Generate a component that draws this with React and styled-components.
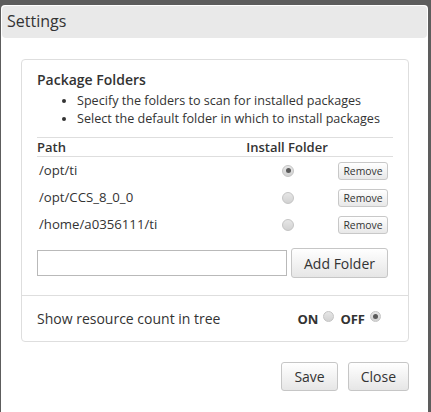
import React from 'react';
import styled, { createGlobalStyle } from 'styled-components';

const GlobalStyle = createGlobalStyle`
  body {
    margin: 0;
    background-color: #5d5d5d;
    font-family: "Open Sans", "Noto Sans", sans-serif;
    color: #333;
    overflow: hidden;
  }
`;

const folders = [
  { path: '/opt/ti', selected: true },
  { path: '/opt/CCS_8_0_0', selected: false },
  { path: '/home/a0356111/ti', selected: false },
];

const App = () => {
  return (
    <React.Fragment>
      <GlobalStyle />
      <Dialog>
        <TitleBar>Settings</TitleBar>
        <Content>
          <Panel>
            <FolderSection>
              <PanelTitle>Package Folders</PanelTitle>
              <HelpList>
                <li>Specify the folders to scan for installed packages</li>
                <li>Select the default folder in which to install packages</li>
              </HelpList>
              <FolderTable>
                <HeadCell>Path</HeadCell>
                <HeadCell className='center'>Install Folder</HeadCell>
                <HeadCell />
                {folders.map(folder => (
                  <React.Fragment key={folder.path}>
                    <PathCell>{folder.path}</PathCell>
                    <RadioCell>
                      <Radio checked={folder.selected} />
                    </RadioCell>
                    <ButtonCell>
                      <SmallButton>Remove</SmallButton>
                    </ButtonCell>
                  </React.Fragment>
                ))}
              </FolderTable>
              <AddRow>
                <FolderInput type='text' />
                <Button className='tall'>Add Folder</Button>
              </AddRow>
            </FolderSection>
            <OptionRow>
              <span>Show resource count in tree</span>
              <Toggle>
                <ToggleLabel>ON</ToggleLabel>
                <Radio small />
                <ToggleLabel>OFF</ToggleLabel>
                <Radio small checked />
              </Toggle>
            </OptionRow>
          </Panel>
          <Footer>
            <Button>Save</Button>
            <Button>Close</Button>
          </Footer>
        </Content>
      </Dialog>
    </React.Fragment>
  );
};

const Dialog = styled.div`
  margin: 5px 0 0 1px;
  width: 427px;
  height: 420px;
  background-color: #fff;
  border-radius: 4px 4px 0 0;
  padding-top: 1px;
  box-sizing: border-box;
`;

const TitleBar = styled.div`
  margin: 0 0 0 1px;
  width: 425px;
  height: 32px;
  line-height: 31px;
  padding-left: 5px;
  box-sizing: border-box;
  background-color: #e9e9e9;
  border-radius: 4px;
  font-size: 16px;
  color: #333;
`;

const Content = styled.div`
  padding: 21px 19px 0 20px;
`;

const Panel = styled.div`
  border: 1px solid #dedede;
  border-radius: 4px;
`;

const FolderSection = styled.div`
  padding: 10px 15px 17px 15px;
  border-bottom: 1px solid #dedede;
`;

const PanelTitle = styled.div`
  font-size: 14px;
  font-weight: 600;
  line-height: 19px;
`;

const HelpList = styled.ul`
  margin: 3px 0 0 0;
  padding: 0 0 0 40px;
  font-size: 12.6px;
  line-height: 17.5px;
  li::marker {
    font-size: 11px;
  }
`;

const FolderTable = styled.div`
  display: grid;
  grid-template-columns: 200px 100px 56px;
  margin-top: 10px;
  border-top: 1px solid #dedede;
`;

const HeadCell = styled.div`
  font-size: 13px;
  font-weight: 600;
  line-height: 18px;
  border-bottom: 1px solid #dedede;
  &.center {
    text-align: center;
  }
`;

const PathCell = styled.div`
  font-size: 13.2px;
  line-height: 27px;
  padding-left: 2px;
`;

const RadioCell = styled.div`
  display: flex;
  align-items: center;
  justify-content: center;
  padding-left: 2px;
`;

const ButtonCell = styled.div`
  display: flex;
  align-items: center;
  padding-left: 1px;
`;

const Radio = styled.span`
  position: relative;
  display: inline-block;
  width: ${props => (props.small ? '11px' : '12px')};
  height: ${props => (props.small ? '11px' : '12px')};
  border-radius: 50%;
  box-sizing: border-box;
  border: 1px solid #c4c4c4;
  background: linear-gradient(#e6e6e6, #d2d2d2);
  &::after {
    content: '';
    display: ${props => (props.checked ? 'block' : 'none')};
    position: absolute;
    left: 50%;
    top: 50%;
    width: 5px;
    height: 5px;
    margin: -2.5px 0 0 -2.5px;
    border-radius: 50%;
    background-color: #5a5a5a;
  }
`;

const SmallButton = styled.button`
  width: 50px;
  height: 18px;
  padding: 0;
  font-family: "Open Sans", sans-serif;
  font-size: 10.4px;
  color: #333;
  background: linear-gradient(#ffffff, #e8e8e8);
  border: 1px solid #c8c8c8;
  border-radius: 3px;
`;

const AddRow = styled.div`
  display: flex;
  align-items: center;
  gap: 4px;
  margin-top: 10px;
`;

const FolderInput = styled.input`
  width: 250px;
  height: 26px;
  box-sizing: border-box;
  border: 1px solid #b9b9b9;
  margin: 0;
  padding: 0 4px;
`;

const Button = styled.button`
  height: 29px;
  padding: 0 12px;
  font-family: "Open Sans", sans-serif;
  font-size: 14px;
  color: #333;
  background: linear-gradient(#ffffff, #e6e6e6);
  border: 1px solid #c6c6c6;
  border-radius: 3px;
  &.tall {
    height: 30px;
    width: 97px;
    padding: 0;
  }
`;

const OptionRow = styled.div`
  display: flex;
  align-items: center;
  justify-content: space-between;
  height: 45px;
  padding: 0 27px 0 15px;
  font-size: 14px;
`;

const Toggle = styled.div`
  display: flex;
  align-items: center;
  gap: 5px;
  margin-top: -4px;
  & > span:nth-child(3) {
    margin-left: 1px;
  }
`;

const ToggleLabel = styled.span`
  font-weight: 700;
  font-size: 13px;
  margin-top: 4px;
`;

const Footer = styled.div`
  display: flex;
  justify-content: flex-end;
  gap: 10px;
  margin-top: 20px;
`;

export default App;
